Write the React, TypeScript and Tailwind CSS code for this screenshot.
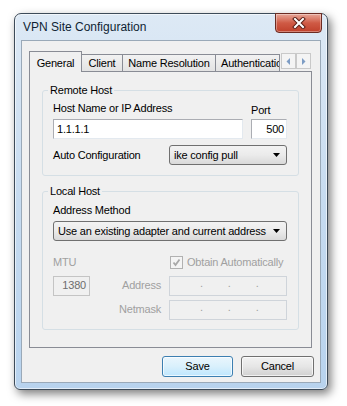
import React from 'react';

const font = { fontFamily: '"Liberation Sans", Arial, sans-serif' };

const CloseButton: React.FC = () => (
    <div className="-mt-[1px] -mr-[1px] w-[47px] h-[20px] rounded-b-[4px] border border-[#6b2b22] bg-gradient-to-b from-[#e6a597] via-[#cf5a45] to-[#c0402b] flex items-center justify-center shadow-[inset_0_0_0_1px_rgba(255,255,255,0.35)]">
        <svg width="14" height="12" viewBox="0 0 14 12">
            <path d="M3 2 L11 10 M11 2 L3 10" stroke="#5b1f16" strokeWidth="4" strokeLinecap="square" />
            <path d="M3 2 L11 10 M11 2 L3 10" stroke="#ffffff" strokeWidth="2" strokeLinecap="square" />
        </svg>
    </div>
);

const Tab: React.FC<{ label: string; active?: boolean; className?: string }> = ({ label, active, className }) =>
    active ? (
        <div className={`relative z-10 h-[21px] -mb-[1px] border border-b-0 border-[#898c95] bg-[#f0f0f0] flex items-start justify-center pt-[3px] ${className ?? ''}`}>
            {label}
        </div>
    ) : (
        <div className={`h-[17px] border border-b-0 border-l-0 border-[#898c95] bg-gradient-to-b from-[#f2f2f2] to-[#e3e3e3] flex items-center justify-center overflow-hidden whitespace-nowrap ${className ?? ''}`}>
            {label}
        </div>
    );

const ArrowButton: React.FC<{ dir: 'left' | 'right' }> = ({ dir }) => (
    <div className="w-[15px] h-[16px] border border-[#c9c9c9] bg-[#f4f4f4] flex items-center justify-center">
        <svg width="5" height="7" viewBox="0 0 5 7">
            {dir === 'left' ? <path d="M4 0 L4 7 L0.5 3.5 Z" fill="#7d9cc4" /> : <path d="M1 0 L1 7 L4.5 3.5 Z" fill="#7d9cc4" />}
        </svg>
    </div>
);

const Combo: React.FC<{ value: string; className?: string }> = ({ value, className }) => (
    <div className={`h-[20px] rounded-[3px] border border-[#707070] bg-gradient-to-b from-[#f3f3f3] via-[#ebebeb] to-[#d9d9d9] flex items-center justify-between pl-[4px] pr-[6px] ${className ?? ''}`}>
        <span className="whitespace-nowrap">{value}</span>
        <svg width="7" height="4" viewBox="0 0 7 4">
            <path d="M0 0 L7 0 L3.5 4 Z" fill="#000" />
        </svg>
    </div>
);

const IpField: React.FC = () => (
    <div className="w-[118px] h-[20px] border border-[#cfd4da] bg-[#f0f0f0] flex items-end pb-[3px] pl-[30px] gap-[25px] text-[#a0a0a0]">
        <span>.</span>
        <span>.</span>
        <span>.</span>
    </div>
);

const App: React.FC = () => {
    return (
        <div className="w-[347px] h-[406px] bg-white pt-[13px] pl-[14px] text-[11px] tracking-[-0.2px] text-black" style={font}>
            <div className="w-[314px] h-[377px] flex flex-col rounded-t-[7px] rounded-b-[6px] border border-[#3d4b59] bg-gradient-to-b from-[#dde9f5] via-[#c6dbf0] to-[#b8d3ee] px-[6px] pb-[6px] shadow-[inset_0_0_0_1px_rgba(255,255,255,0.6),3px_4px_10px_rgba(0,0,0,0.5)]">
                <div className="h-[26px] flex items-start justify-between">
                    <span className="pl-[2px] leading-[26px] text-[12px] tracking-normal text-[#0f1f33]">VPN Site Configuration</span>
                    <CloseButton />
                </div>
                <div className="flex-1 border border-[#9aa9b8] bg-[#f0f0f0] pt-[10px] pl-[7px] pr-[8px]">
                    <div className="flex items-end h-[20px]">
                        <Tab label="General" active className="w-[53px]" />
                        <Tab label="Client" className="w-[41px]" />
                        <Tab label="Name Resolution" className="w-[93px]" />
                        <Tab label="Authentication" className="w-[64px] !justify-start pl-[5px]" />
                        <div className="flex self-start mt-[2px] ml-[1px]">
                            <ArrowButton dir="left" />
                            <ArrowButton dir="right" />
                        </div>
                    </div>
                    <div className="h-[277px] border border-[#898c95] bg-[#f0f0f0] pt-[12px] px-[12px]">
                        <fieldset className="border border-[#d5dfe5] rounded-[3px] pl-[10px] pr-[11px] pt-[5px] pb-[10px]">
                            <legend className="-ml-[5px] px-[2px] leading-[13px]">Remote Host</legend>
                            <div className="flex gap-[8px]">
                                <div className="flex-1 flex flex-col">
                                    <span className="leading-[13px]">Host Name or IP Address</span>
                                    <div className="mt-[4px] h-[20px] border border-[#abadb3] border-r-[#e3e9ef] border-b-[#e3e9ef] bg-white flex items-center pl-[3px]">1.1.1.1</div>
                                </div>
                                <div className="w-[36px] flex flex-col">
                                    <span className="leading-[13px] pt-[2px]">Port</span>
                                    <div className="mt-[2px] h-[20px] border border-[#abadb3] border-r-[#e3e9ef] border-b-[#e3e9ef] bg-white flex items-center justify-end pr-[2px]">500</div>
                                </div>
                            </div>
                            <div className="mt-[6px] flex items-center">
                                <span className="flex-1">Auto Configuration</span>
                                <Combo value="ike config pull" className="w-[118px]" />
                            </div>
                        </fieldset>
                        <fieldset className="mt-[9px] border border-[#d5dfe5] rounded-[3px] pl-[10px] pr-[11px] pt-[6px] pb-[9px]">
                            <legend className="-ml-[5px] px-[2px] leading-[13px]">Local Host</legend>
                            <span className="block leading-[13px]">Address Method</span>
                            <Combo value="Use an existing adapter and current address" className="mt-[4px] w-full" />
                            <div className="mt-[13px] flex items-center text-[#a0a0a0]">
                                <span className="w-[117px]">MTU</span>
                                <div className="w-[13px] h-[13px] border border-[#b1b1b1] bg-[#f4f4f4] flex items-center justify-center">
                                    <svg width="9" height="9" viewBox="0 0 9 9">
                                        <path d="M1.5 4.5 L3.5 7 L7.5 1.5" stroke="#a8a8a8" strokeWidth="1.8" fill="none" />
                                    </svg>
                                </div>
                                <span className="ml-[4px]">Obtain Automatically</span>
                            </div>
                            <div className="mt-[5px] flex items-center">
                                <div className="w-[37px] h-[20px] border border-[#c4c4c4] bg-[#f0f0f0] flex items-center justify-end pr-[3px] text-[#6d6d6d]">1380</div>
                                <span className="flex-1 text-right pr-[8px] text-[#a0a0a0]">Address</span>
                                <IpField />
                            </div>
                            <div className="mt-[4px] flex items-center">
                                <span className="flex-1 text-right pr-[8px] text-[#a0a0a0]">Netmask</span>
                                <IpField />
                            </div>
                        </fieldset>
                    </div>
                    <div className="mt-[8px] -mr-[2px] flex justify-end gap-[8px]">
                        <button className="w-[71px] h-[21px] rounded-[3px] border border-[#3c7fb1] bg-gradient-to-b from-[#eaf6fd] via-[#d9f0fc] to-[#bee6fd] shadow-[inset_0_0_0_1px_rgba(255,255,255,0.7)]">
                            Save
                        </button>
                        <button className="w-[73px] h-[21px] rounded-[3px] border border-[#707070] bg-gradient-to-b from-[#f2f2f2] via-[#e6e6e6] to-[#d0d0d0] shadow-[inset_0_0_0_1px_rgba(255,255,255,0.7)]">
                            Cancel
                        </button>
                    </div>
                </div>
            </div>
        </div>
    );
};

export default App;
